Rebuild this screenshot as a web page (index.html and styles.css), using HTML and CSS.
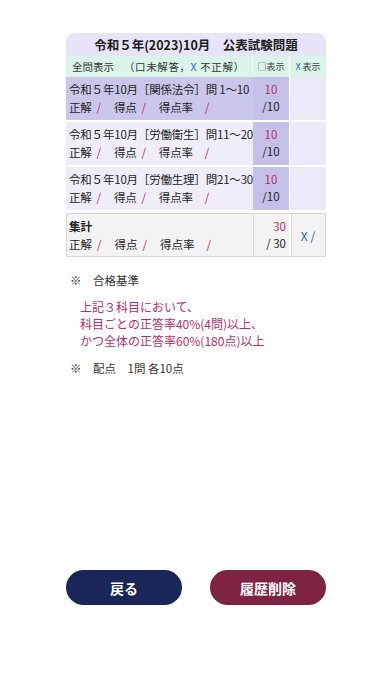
FILE: index.html
```html
<!DOCTYPE html>
<html lang="ja">
<head>
<meta charset="utf-8">
<link rel="stylesheet" href="styles.css">
</head>
<body>
<div class="page">
  <div class="card">
    <div class="title">令和５年(2023)10月　公表試験問題</div>
    <div class="hdr">
      <div class="hdr-main"><span>全問表示</span><span class="paren">（口未解答，<span class="blue">X</span> 不正解）</span></div>
      <div class="hdr-cell">□表示</div>
      <div class="hdr-cell"><span class="blue">X</span> 表示</div>
    </div>
    <div class="row first">
      <div class="main">
        <div>令和５年10月［関係法令］問 1〜10</div>
        <div>正解<span class="sl">/</span>得点<span class="sl">/</span>得点率<span class="sl last">/</span></div>
      </div>
      <div class="score"><span class="pk">10</span><span>/10</span></div>
      <div class="side"></div>
    </div>
    <div class="row">
      <div class="main">
        <div>令和５年10月［労働衛生］問11〜20</div>
        <div>正解<span class="sl">/</span>得点<span class="sl">/</span>得点率<span class="sl last">/</span></div>
      </div>
      <div class="score"><span class="pk">10</span><span>/10</span></div>
      <div class="side"></div>
    </div>
    <div class="row">
      <div class="main">
        <div>令和５年10月［労働生理］問21〜30</div>
        <div>正解<span class="sl">/</span>得点<span class="sl">/</span>得点率<span class="sl last">/</span></div>
      </div>
      <div class="score"><span class="pk">10</span><span>/10</span></div>
      <div class="side"></div>
    </div>
    <div class="total">
      <div class="main">
        <div class="b">集計</div>
        <div>正解<span class="sl">/</span>得点<span class="sl">/</span>得点率<span class="sl last">/</span></div>
      </div>
      <div class="tscore"><span class="pk">30</span><span>/ 30</span></div>
      <div class="tside"><span class="blue">X /</span></div>
    </div>
  </div>

  <div class="note">※　合格基準</div>
  <div class="crit">
    <div>上記３科目において、</div>
    <div>科目ごとの正答率40%(4問)以上、</div>
    <div>かつ全体の正答率60%(180点)以上</div>
  </div>
  <div class="note note2">※　配点　1問 各10点</div>

  <div class="buttons">
    <div class="btn back">戻る</div>
    <div class="btn del">履歴削除</div>
  </div>
</div>
</body>
</html>
```

FILE: styles.css
```css
* { box-sizing: border-box; }
html, body {
  margin: 0;
  padding: 0;
  background: #ffffff;
  font-family: "Noto Sans CJK JP", "Noto Sans", sans-serif;
  color: #222;
}
.page {
  width: 392px;
  height: 696px;
  padding-top: 33px;
  display: flex;
  flex-direction: column;
  align-items: center;
}
.card {
  width: 260px;
  display: flex;
  flex-direction: column;
}
.title {
  height: 23px;
  background: #e6e4f6;
  border-radius: 9px 9px 0 0;
  font-size: 12.5px;
  font-weight: 700;
  text-align: center;
  line-height: 24px;
  color: #1c1c1c;
}
.hdr {
  height: 21px;
  display: flex;
  background: #dbf4ea;
  font-size: 10.5px;
  line-height: 21px;
  color: #333;
}
.hdr-main {
  width: 187px;
  padding-left: 6px;
  border-right: 1px solid #fff;
  white-space: nowrap;
}
.paren {
  margin-left: 10px;
  letter-spacing: 0.6px;
}
.hdr-cell {
  flex: 1;
  text-align: center;
  font-size: 9px;
  color: #444;
}
.hdr-cell + .hdr-cell { border-left: 1px solid #fff; }
.blue { color: #2a64b8; }
.pk { color: #b82a6a; }
.sl {
  color: #b82a6a;
  margin: 0 13px 0 5px;
}
.sl.last { margin-left: 12px; }
.row {
  height: 43px;
  display: flex;
  background: #ffffff;
  margin-bottom: 2px;
  font-size: 11.5px;
}
.row .main {
  width: 187px;
  background: #eeedf9;
  padding: 3px 0 0 3px;
  line-height: 18px;
  white-space: nowrap;
  letter-spacing: -0.2px;
}
.row.first .main { background: #cac7ea; }
.row .score {
  width: 36px;
  background: #c4c1e9;
  display: flex;
  flex-direction: column;
  align-items: center;
  padding-top: 4px;
  line-height: 17px;
  font-size: 11.5px;
}
.row .side {
  flex: 1;
  margin-left: 1px;
  background: #ebeaf8;
}
.total {
  height: 44px;
  display: flex;
  margin-top: 1px;
  font-size: 11.5px;
  background: #f3f3f3;
  border: 1px solid #d8d8d8;
}
.total .main {
  width: 186px;
  padding: 3px 0 0 2px;
  line-height: 18px;
  white-space: nowrap;
}
.b { font-weight: 700; }
.tscore {
  width: 36px;
  border-left: 1px solid #d8d8d8;
  display: flex;
  flex-direction: column;
  align-items: flex-end;
  padding: 4px 3px 0 0;
  line-height: 17px;
}
.tside {
  flex: 1;
  border-left: 2px solid #fff;
  box-shadow: inset 1px 0 0 #d8d8d8;
  display: flex;
  align-items: center;
  justify-content: center;
  font-size: 12px;
}
.note {
  width: 260px;
  padding-left: 4px;
  margin-top: 14px;
  font-size: 11.5px;
  line-height: 18px;
  color: #333;
}
.crit {
  width: 260px;
  padding-left: 14px;
  margin-top: 9px;
  font-size: 12px;
  line-height: 17px;
  color: #b2306a;
}
.note2 { margin-top: 10px; }
.buttons {
  width: 260px;
  margin-top: auto;
  margin-bottom: 91px;
  display: flex;
  justify-content: space-between;
}
.btn {
  width: 116px;
  height: 35px;
  border-radius: 18px;
  color: #fff;
  font-weight: 700;
  font-size: 14px;
  display: flex;
  align-items: center;
  justify-content: center;
}
.back { background: #1b2658; }
.del { background: #7e2442; }
```
